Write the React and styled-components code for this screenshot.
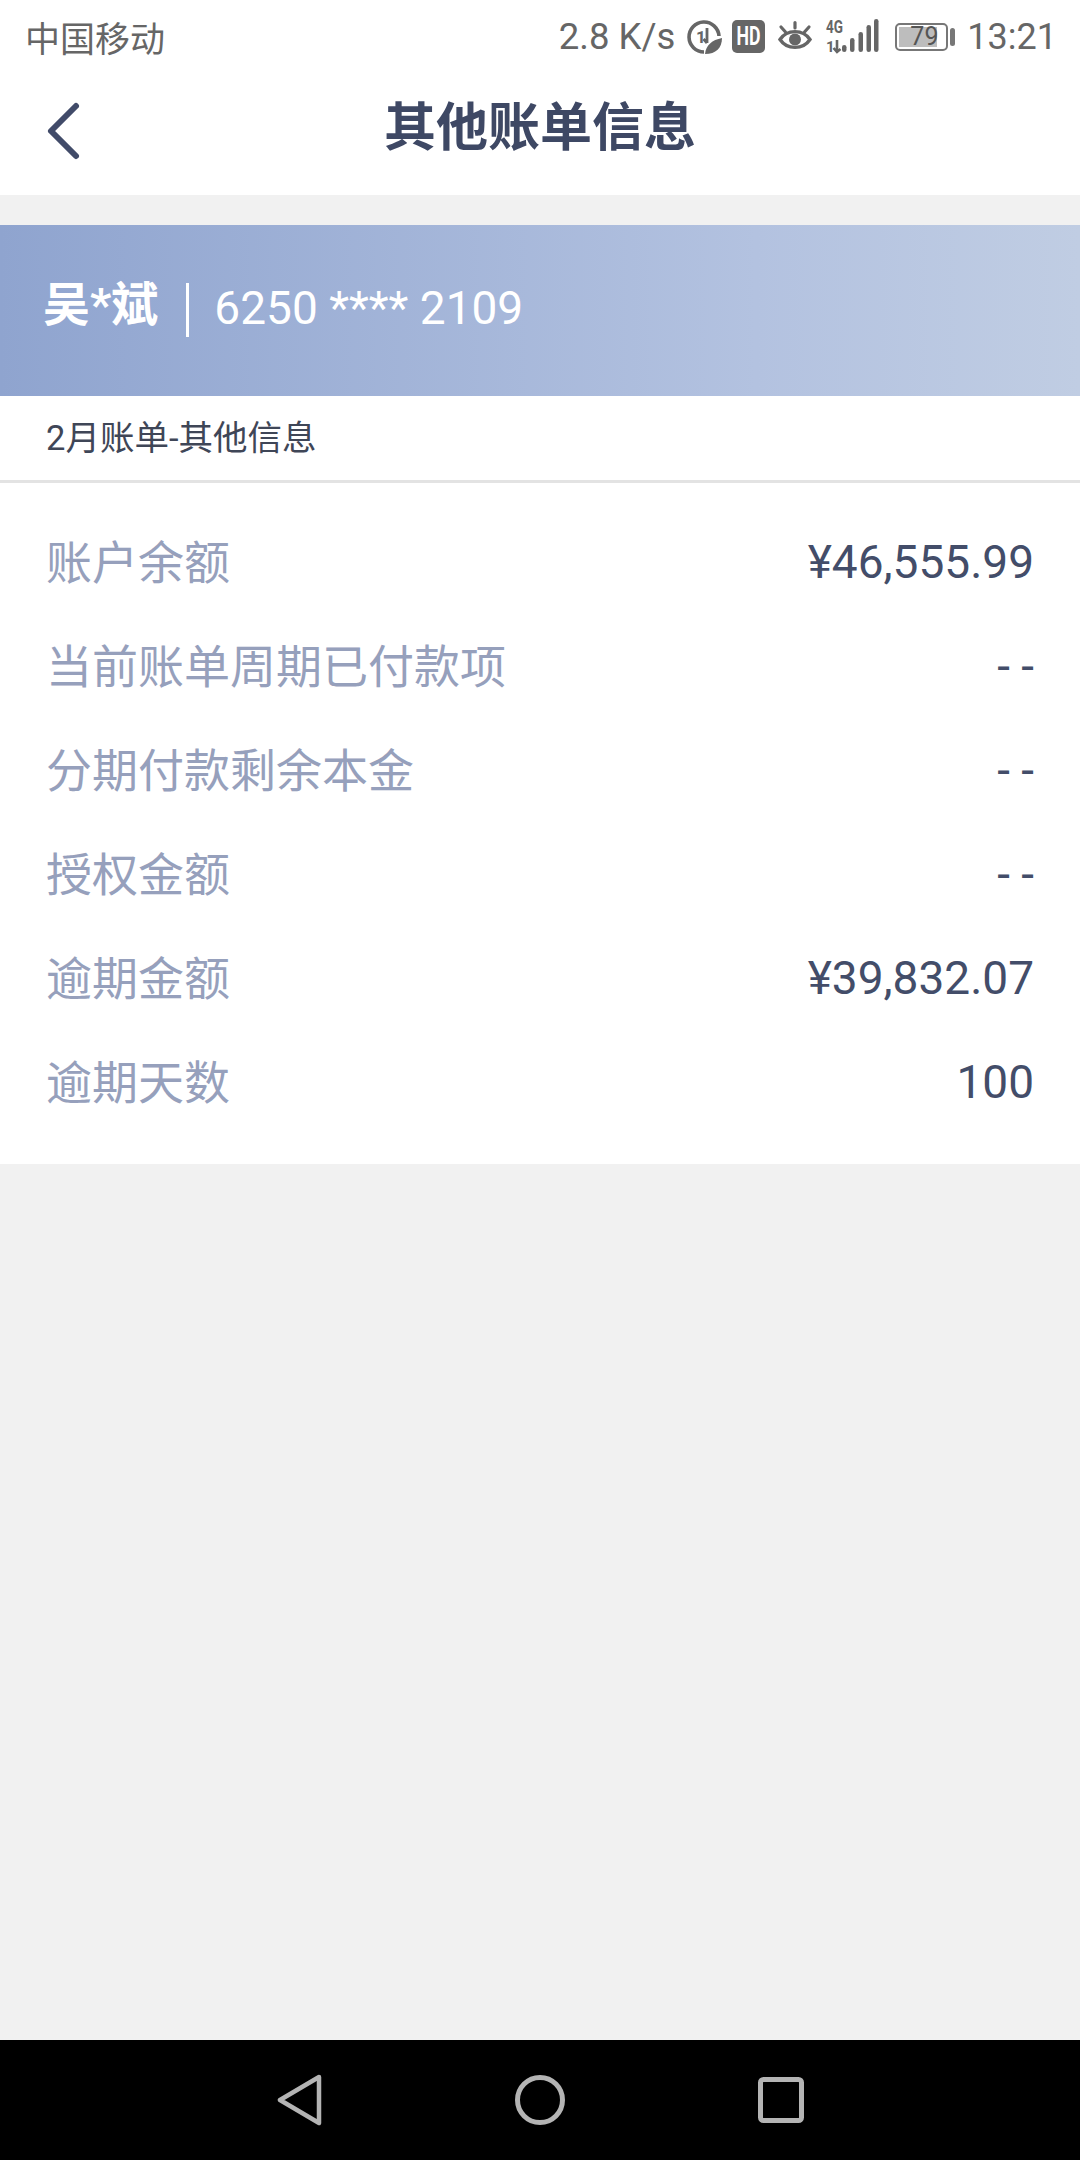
import React from "react";
import styled, { createGlobalStyle } from "styled-components";

const Global = createGlobalStyle`
  html, body { margin: 0; padding: 0; background: #f1f1f1; }
  * { box-sizing: border-box; }
`;
const CJK = `Roboto, "Noto Sans CJK SC", sans-serif`;
const gray = "#666";

const Page = styled.div`
  width: 1080px; height: 2160px; display: flex; flex-direction: column;
  background: #f1f1f1; font-family: ${CJK}; overflow: hidden;
`;
const TopArea = styled.header`
  height: 195px; background: #fff; display: flex; flex-direction: column;
`;
const StatusBar = styled.div`
  height: 73px; display: flex; align-items: center; justify-content: space-between;
  padding: 0 23px 0 25px; color: ${gray};
`;
const StatusRight = styled.div`display: flex; align-items: center;`;
const Carrier = styled.span`font-size: 35px;`;
const Speed = styled.span`font-size: 36.5px;`;
const Clock = styled.span`font-size: 36px; margin-left: 12px;`;
const NavBar = styled.div`
  position: relative; flex: 1; display: flex; align-items: center; justify-content: center; padding-bottom: 11px;
`;
const BackIcon = styled.svg`position: absolute; left: 45px; top: 27px;`;
const Title = styled.h1`margin: 0; font-size: 52px; font-weight: 700; color: #3e4864; line-height: 1;`;
const Banner = styled.section`
  margin-top: 30px; height: 171px; display: flex; align-items: center; padding-left: 43px; color: #fff;
  background: linear-gradient(90deg, #8fa4cf 0%, #b3c2e0 70%, #c0cde3 100%);
`;
const Name = styled.span`font-size: 47px; font-weight: 700; margin-bottom: 20px;`;
const Divider = styled.i`width: 3px; height: 54px; background: #fff; margin: 0 25px 2px 28px;`;
const CardNo = styled.span`font-size: 46px; margin-bottom: 6px;`;
const SubHead = styled.div`
  height: 84px; background: #fff; display: flex; align-items: center; padding: 0 0 7px 46px;
  font-size: 34.5px; color: #3f4657;
`;
const Rule = styled.div`height: 3px; background: #e3e3e3;`;
const List = styled.dl`
  margin: 0; height: 681px; background: #fff; padding: 27px 46px 0 46px; display: flex; flex-direction: column;
`;
const Row = styled.div`
  height: 104px; display: flex; align-items: center; justify-content: space-between;
`;
const Label = styled.dt`font-size: 46px; color: #96a0bc; margin-bottom: 6px;`;
const Value = styled.dd`margin: 0; font-size: 46px; color: #434d69;`;
const Spacer = styled.div`flex: 1;`;
const BottomNav = styled.nav`
  height: 120px; background: #000; display: flex; align-items: center; justify-content: center; gap: 193px;
`;
const IconSvg = styled.svg`
  display: block; flex: none; overflow: visible;
  margin-left: ${p => p.$ml || 0}px; margin-bottom: ${p => p.$mb || 0}px;
`;
const BatteryWrap = styled.span`display: flex; align-items: center; margin-left: 16px;`;
const BatteryBody = styled.span`
  position: relative; width: 53px; height: 28px; border: 2px solid #777; border-radius: 5px; padding: 2px;
  display: flex; align-items: stretch;
`;
const BatteryFill = styled.span`width: 38px; background: #bdbdbd;`;
const BatteryLabel = styled.span`
  position: absolute; top: 0; left: 13px; font-size: 25px; line-height: 24px; color: #555;
`;
const BatteryCap = styled.span`width: 5px; height: 18px; border-radius: 2.5px; background: #777; margin-left: 2px;`;

const Back = () => (
  <BackIcon width="36" height="62" viewBox="0 0 36 62" fill="none">
    <path d="M31 6 L6 31 L31 56" stroke="#414b69" strokeWidth="6" strokeLinecap="round" strokeLinejoin="round" />
  </BackIcon>
);
const DataSaver = () => (
  <IconSvg $ml={12} width="35" height="34" viewBox="0 0 35 34" fill="none">
    <path d="M17 32 A15 15 0 1 1 32 16" stroke={gray} strokeWidth="3.6" />
    <text x="9" y="23" fontSize="17" fontWeight="700" fontFamily="Roboto" fill={gray}>1</text>
    <path d="M20 8 V23 M16.5 19 L20 23" stroke={gray} strokeWidth="2.8" />
    <path d="M18 34 C19 25 25 20 35 18 C35 28 29 34 18 34 Z" fill={gray} />
  </IconSvg>
);
const HD = () => (
  <IconSvg $ml={10} width="33" height="33" viewBox="0 0 33 33">
    <rect width="33" height="33" rx="5" fill={gray} />
    <text x="4.5" y="25" fontSize="25" fontWeight="700" fontFamily="Roboto" fill="#fff" textLength="24" lengthAdjust="spacingAndGlyphs">HD</text>
  </IconSvg>
);
const Eye = () => (
  <IconSvg $ml={13} $mb={4} width="34" height="28" viewBox="0 0 34 28" fill="none">
    <path d="M2 18.5 C9 8 25 8 32 18.5 C25 29 9 29 2 18.5 Z" stroke={gray} strokeWidth="3.4" />
    <circle cx="17" cy="18.5" r="6" fill={gray} />
    <path d="M17 1.5 V7 M3 6 L7.5 11 M31 6 L26.5 11" stroke={gray} strokeWidth="3.2" strokeLinecap="round" />
  </IconSvg>
);
const Signal = () => (
  <IconSvg $ml={13} $mb={2} width="54" height="33" viewBox="0 0 54 33" fill="none">
    <text x="1" y="14" fontSize="18" fontWeight="700" fontFamily="Roboto" fill={gray} textLength="17" lengthAdjust="spacingAndGlyphs">4G</text>
    <text x="1" y="33" fontSize="15" fontWeight="700" fontFamily="Roboto" fill={gray}>1</text>
    <path d="M12 21 V33 M8.5 29 L12 33 L15.5 30" stroke={gray} strokeWidth="2.6" />
    <rect x="17" y="26" width="4.5" height="7" rx="2.25" fill={gray} />
    <rect x="25" y="19" width="4.5" height="14" rx="2.25" fill={gray} />
    <rect x="33.5" y="13" width="4.5" height="20" rx="2.25" fill={gray} />
    <rect x="41.5" y="6" width="4.5" height="27" rx="2.25" fill={gray} />
    <rect x="49" y="0" width="4.5" height="33" rx="2.25" fill={gray} />
  </IconSvg>
);

export default function App() {
  const rows = [
    ["账户余额", "¥46,555.99"],
    ["当前账单周期已付款项", "- -"],
    ["分期付款剩余本金", "- -"],
    ["授权金额", "- -"],
    ["逾期金额", "¥39,832.07"],
    ["逾期天数", "100"],
  ];
  return (
    <Page>
      <Global />
      <TopArea>
        <StatusBar>
          <Carrier>中国移动</Carrier>
          <StatusRight>
            <Speed>2.8 K/s</Speed>
            <DataSaver />
            <HD />
            <Eye />
            <Signal />
            <BatteryWrap>
              <BatteryBody>
                <BatteryFill />
                <BatteryLabel>79</BatteryLabel>
              </BatteryBody>
              <BatteryCap />
            </BatteryWrap>
            <Clock>13:21</Clock>
          </StatusRight>
        </StatusBar>
        <NavBar>
          <Back />
          <Title>其他账单信息</Title>
        </NavBar>
      </TopArea>
      <Banner>
        <Name>吴*斌</Name>
        <Divider />
        <CardNo>6250 **** 2109</CardNo>
      </Banner>
      <SubHead>2月账单-其他信息</SubHead>
      <Rule />
      <List>
        {rows.map(([l, v]) => (
          <Row key={l}>
            <Label>{l}</Label>
            <Value>{v}</Value>
          </Row>
        ))}
      </List>
      <Spacer />
      <BottomNav>
        <svg width="45" height="52" viewBox="0 0 45 52" fill="none">
          <path d="M42 3 L3 26 L42 49 Z" stroke="#b4b4b4" strokeWidth="4.5" strokeLinejoin="round" />
        </svg>
        <svg width="50" height="50" viewBox="0 0 50 50" fill="none">
          <circle cx="25" cy="25" r="22.5" stroke="#b4b4b4" strokeWidth="5" />
        </svg>
        <svg width="46" height="46" viewBox="0 0 46 46" fill="none">
          <rect x="2.5" y="2.5" width="41" height="41" rx="3" stroke="#b4b4b4" strokeWidth="5" />
        </svg>
      </BottomNav>
    </Page>
  );
}
